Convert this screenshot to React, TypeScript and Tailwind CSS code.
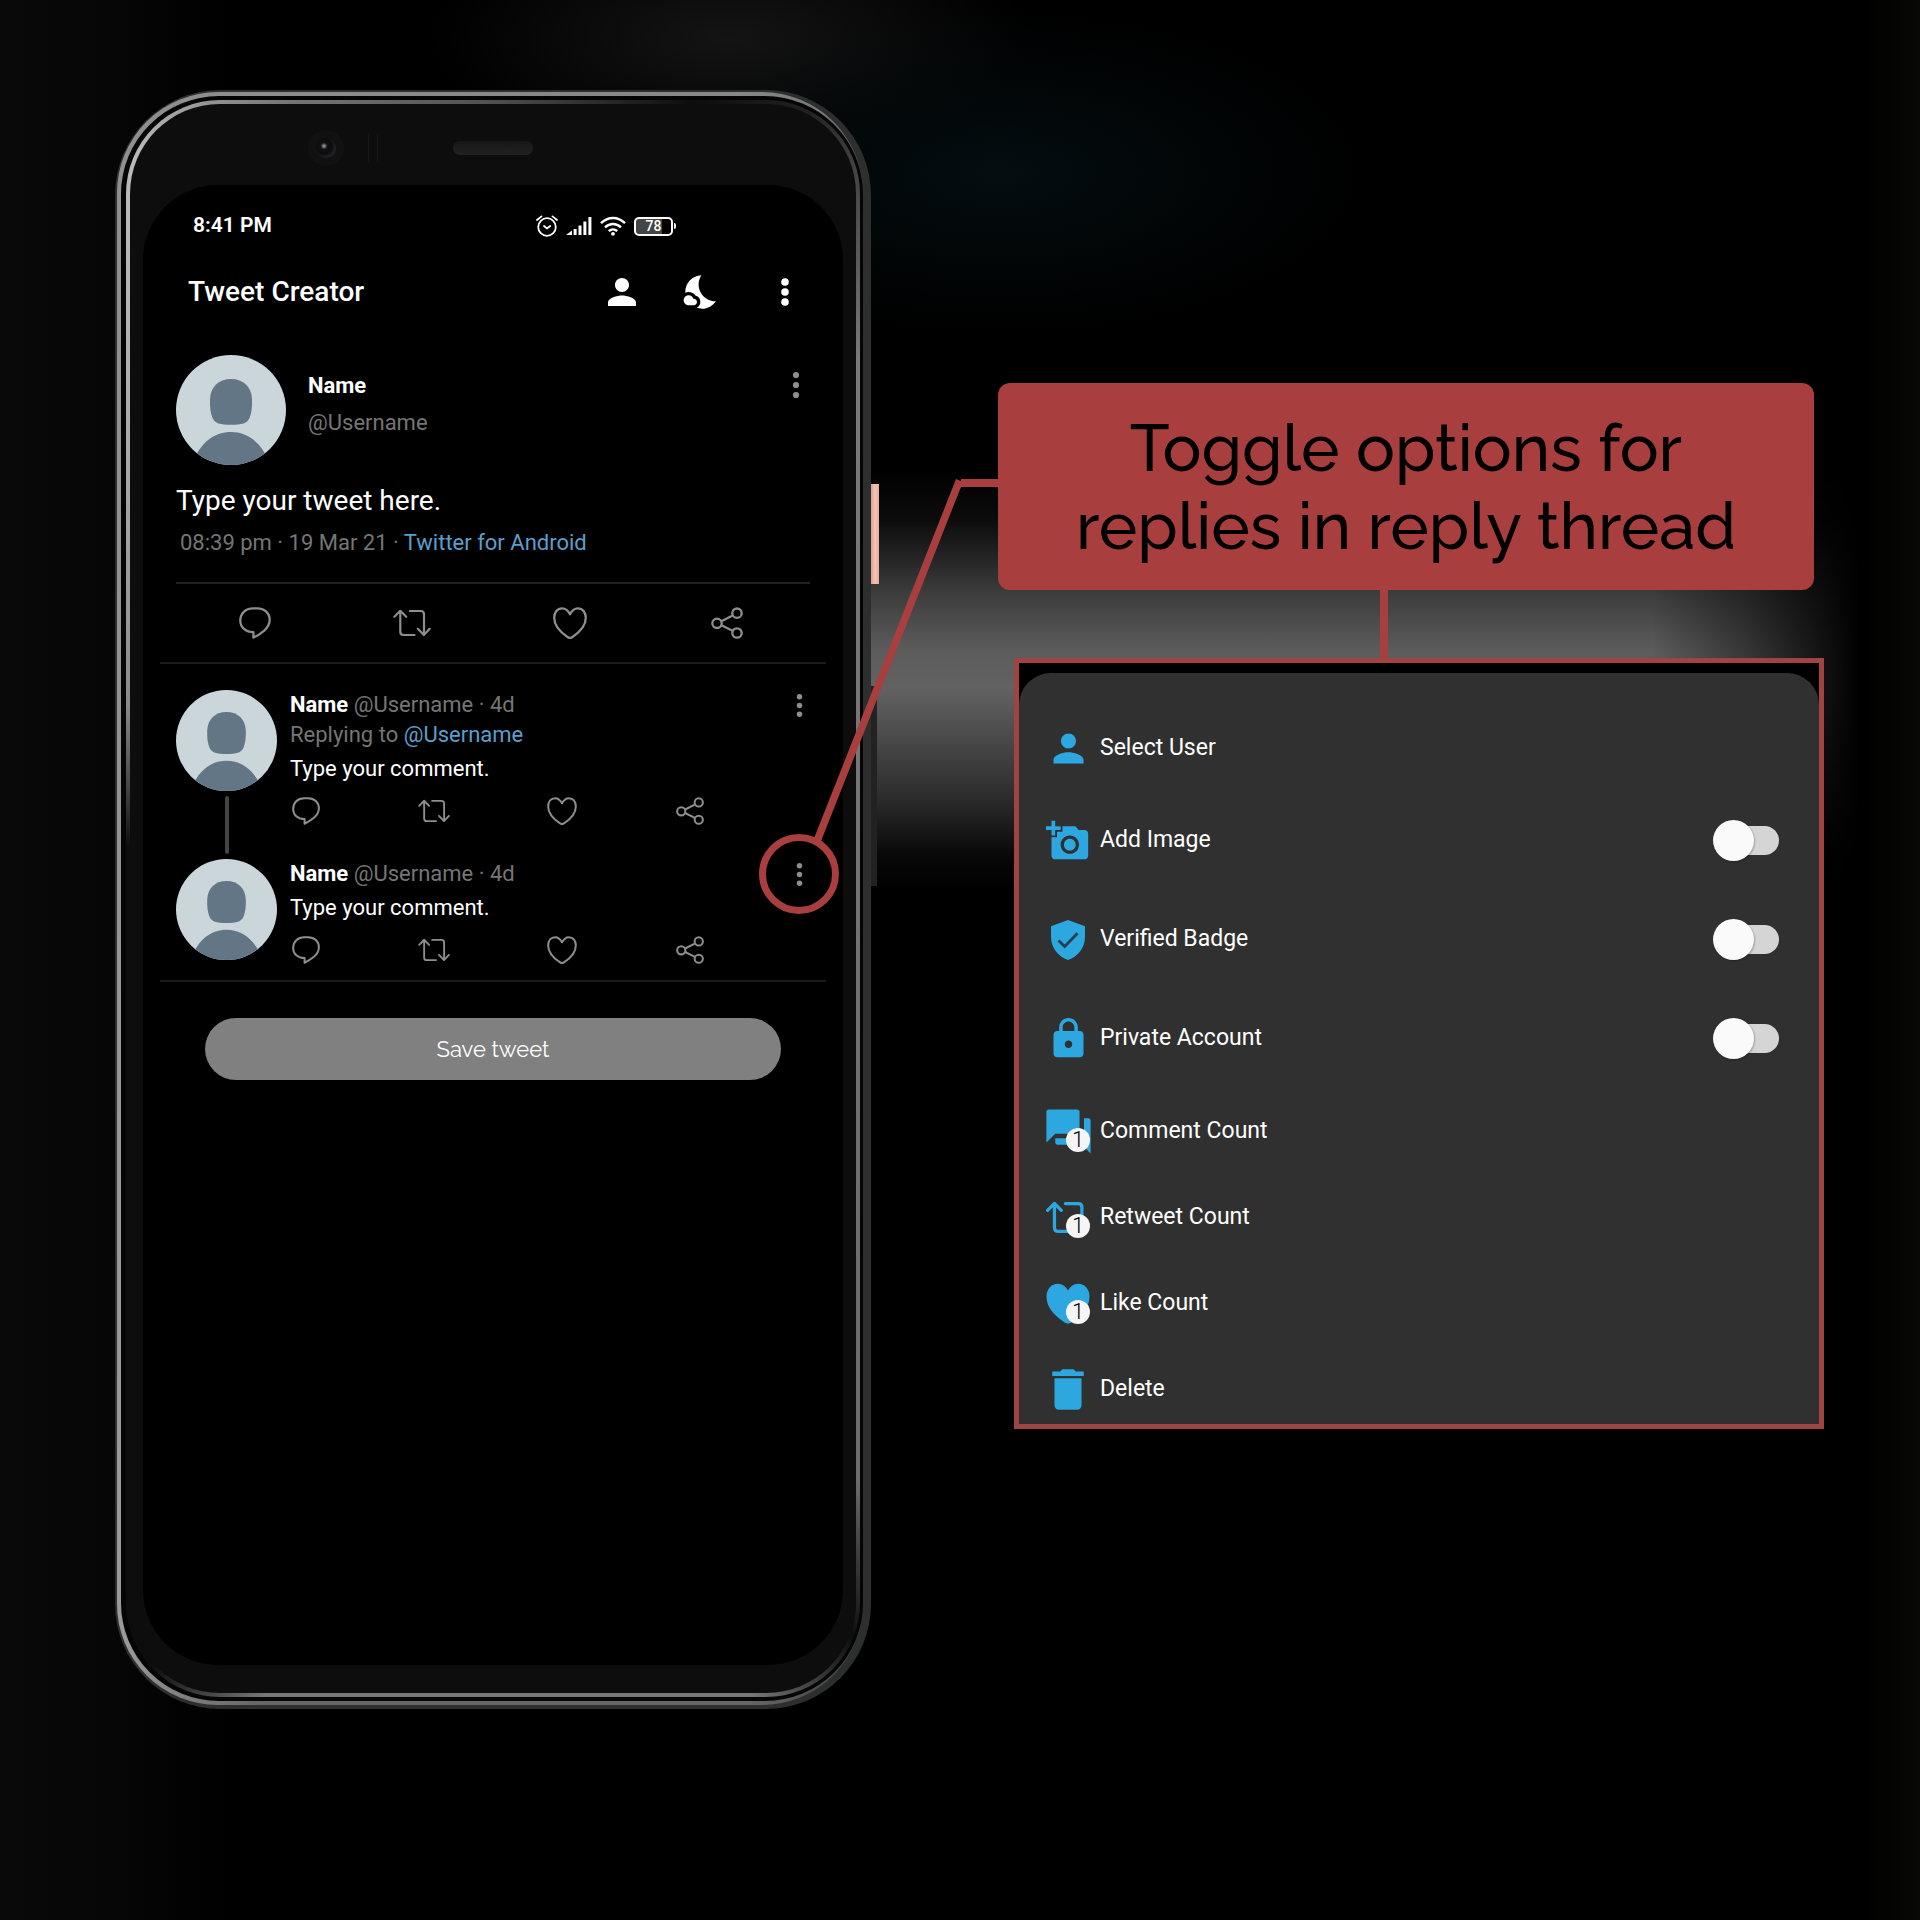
import React from "react";
import {
  MdAddAPhoto,
  MdDelete,
  MdForum,
  MdLock,
  MdNightsStay,
  MdPerson,
} from "react-icons/md";

type IconProps = { className?: string };

const HEART_PATH =
  "M17 7.200C15 3.400 12.400 1.300 9.200 1.300C4.400 1.300 1.200 5.200 1.200 10.800C1.200 18.600 7.600 25.400 14.800 30.200Q17 31.600 19.200 30.200C26.400 25.400 32.800 18.600 32.800 10.800C32.800 5.200 29.600 1.300 24.800 1.300C21.600 1.300 19 3.400 17 7.200Z";

function BubbleIcon({ className }: IconProps) {
  return (
    <svg viewBox="0 0 32 32" className={className} fill="none" stroke="currentColor" strokeWidth="2.300" strokeLinejoin="round" aria-hidden="true">
      <path d="M14.4 30.600V25.2C6.6 25.2 1.300 20.4 1.300 13.6C1.300 6.4 6.6 1.400 14 1.400H18.4C25.6 1.400 30.700 6.2 30.700 12.8C30.700 17.4 28.4 20.9 25 23.8C21.800 26.4 18.400 28.8 14.400 30.600Z" />
    </svg>
  );
}

function RetweetIcon({ className, strokeWidth = 2.2 }: IconProps & { strokeWidth?: number }) {
  return (
    <svg viewBox="0 0 38 28" className={className} fill="none" stroke="currentColor" strokeWidth={strokeWidth} strokeLinecap="round" strokeLinejoin="round" aria-hidden="true">
      <path d="M1.400 7.800L7.300 1.800L13.200 7.800M7.300 2V22.800Q7.300 26 10.400 26H21.500" />
      <path d="M16.800 2H27.800Q31 2 31 5.200V25.800M24.900 19.800L30.900 26L36.700 19.800" />
    </svg>
  );
}

function HeartIcon({ className }: IconProps) {
  return (
    <svg viewBox="0 0 34 32" className={className} fill="none" stroke="currentColor" strokeWidth="2.300" strokeLinejoin="round" aria-hidden="true">
      <path d={HEART_PATH} />
    </svg>
  );
}

function FilledHeartIcon({ className }: IconProps) {
  return (
    <svg viewBox="0 0 34 32" preserveAspectRatio="none" className={className} fill="currentColor" stroke="currentColor" strokeWidth="1.600" strokeLinejoin="round" aria-hidden="true">
      <path d={HEART_PATH} />
    </svg>
  );
}

function ShieldIcon({ className }: IconProps) {
  return (
    <svg viewBox="0 0 34 40" className={className} fill="currentColor" aria-hidden="true">
      <path d="M17 0L34 6.200V17C34 27.500 27 36.500 17 40C7 36.500 0 27.500 0 17V6.200Z" />
      <path d="M7.500 20.500L13.700 26.500L26.500 13.200" fill="none" stroke="#24404d" strokeWidth="2.800" />
    </svg>
  );
}

function ShareIcon({ className }: IconProps) {
  return (
    <svg viewBox="0 0 32 32" className={className} fill="none" stroke="currentColor" strokeWidth="2.300" aria-hidden="true">
      <circle cx="6" cy="16.300" r="4.700" />
      <circle cx="26" cy="6.200" r="4.700" />
      <circle cx="26" cy="26" r="4.700" />
      <path d="M10.400 14.300L21.600 8.600M10.400 18.300L21.600 23.800" />
    </svg>
  );
}

function DotsIcon({ className, radius = 3.1 }: IconProps & { radius?: number }) {
  return (
    <svg viewBox="0 0 8 28" className={className} fill="currentColor" aria-hidden="true">
      <circle cx="4" cy="4" r={radius} />
      <circle cx="4" cy="14" r={radius} />
      <circle cx="4" cy="24" r={radius} />
    </svg>
  );
}

function Avatar({ className }: IconProps) {
  return (
    <svg viewBox="0 0 110 110" className={className} role="img" aria-label="Profile picture">
      <clipPath id="avatar-clip">
        <circle cx="55" cy="55" r="55" />
      </clipPath>
      <g clipPath="url(#avatar-clip)">
        <rect width="110" height="110" fill="#cbd6db" />
        <path d="M55 24C67.500 24 75.500 32 76 44C76.300 52 75.500 58 73.500 63C71 68.500 66 69.800 55 69.800C44 69.800 39 68.500 36.500 63C34.500 58 33.700 52 34 44C34.500 32 42.500 24 55 24Z" fill="#637686" />
        <path d="M14 115C22 88 38 77 55 77C72 77 88 88 96 115Z" fill="#637686" />
      </g>
    </svg>
  );
}

function StatusIcons() {
  return (
    <div className="flex items-center gap-2 text-white">
      <svg viewBox="0 0 22 22" className="size-[22px]" fill="none" stroke="currentColor" strokeWidth="1.800" strokeLinecap="round" aria-label="Alarm set">
        <circle cx="11" cy="12" r="8.800" />
        <path d="M1 5L5.500 1.400M21 5L16.500 1.400M8 11L11 13.400L14.200 11" />
      </svg>
      <svg viewBox="0 0 26 20" className="h-5 w-[26px]" fill="currentColor" aria-label="Signal strength">
        <path d="M0 19L6 14.500V19Z" />
        <rect x="7.600" y="13" width="3" height="6" />
        <rect x="12.500" y="9.500" width="3" height="9.500" />
        <rect x="17.400" y="5.500" width="3" height="13.500" />
        <rect x="22.400" y="1" width="3" height="18" />
      </svg>
      <svg viewBox="0 0 26 20" className="h-5 w-[26px]" fill="none" stroke="currentColor" strokeWidth="2.400" aria-label="Wi-Fi">
        <path d="M1 7.200C8 0.200 18 0.200 25 7.200M5 11.400C9.800 6.900 16.200 6.900 21 11.400M8.800 15.200C11.300 12.800 14.700 12.800 17.200 15.200" />
        <circle cx="13" cy="17.800" r="1.900" fill="currentColor" stroke="none" />
      </svg>
      <div className="flex items-center gap-px">
        <span className="flex h-[19px] w-[39px] items-center justify-center rounded-[5px] border-2 border-white bg-linear-to-r from-[#444] from-75% to-black to-75% text-sm font-medium">
          78
        </span>
        <span className="h-1.5 w-0.5 rounded-r bg-white" />
      </div>
    </div>
  );
}

function Actions({ small = false }: { small?: boolean }) {
  const square = small ? "size-7" : "size-8";
  const items = [
    { label: "Reply", icon: <BubbleIcon className={square} /> },
    { label: "Retweet", icon: <RetweetIcon className={small ? "h-6 w-[33px]" : "h-7 w-[38px]"} /> },
    { label: "Like", icon: <HeartIcon className={small ? "h-7 w-[30px]" : "h-8 w-[34px]"} /> },
    { label: "Share", icon: <ShareIcon className={square} /> },
  ];
  return (
    <div className={small ? "mt-[11px] flex h-8 w-4/5 justify-between" : "grid h-[78px] grid-cols-4 pr-1"}>
      {items.map((item) => (
        <button
          key={item.label}
          type="button"
          aria-label={item.label}
          className={
            small
              ? "flex w-8 items-center justify-center text-[#8e8e8e]"
              : "flex items-center justify-center text-[#8e8e8e]"
          }
        >
          {item.icon}
        </button>
      ))}
    </div>
  );
}

/* Ring round the menu button, with the leader that runs to the caption. */
function Callout() {
  return (
    <svg
      viewBox="0 0 240 440"
      className="pointer-events-none absolute -top-[386px] -left-[29px] z-20 h-[440px] w-[240px] max-w-none"
      fill="none"
      stroke="#a83f3e"
      aria-hidden="true"
    >
      <circle cx="40" cy="400" r="36.500" strokeWidth="7" />
      <path d="M58 367L200.500 6.500" strokeWidth="7.500" />
      <path d="M202 9H240" strokeWidth="8" />
    </svg>
  );
}

function Reply({ replyingTo, threaded, highlighted }: { replyingTo?: string; threaded?: boolean; highlighted?: boolean }) {
  return (
    <article className="flex gap-[13px]">
      <div className="flex w-[101px] shrink-0 flex-col items-center">
        <Avatar className="size-[101px] shrink-0" />
        {threaded && <span className="my-[5px] w-1 flex-1 rounded bg-[#444]" />}
      </div>
      <div className={threaded ? "min-w-0 flex-1 pb-8" : "min-w-0 flex-1"}>
        <div className="flex items-center justify-between">
          <p className="text-[22px] leading-[30px] text-[#757575]">
            <strong className="font-bold text-white">Name</strong> @Username · 4d
          </p>
          <button type="button" aria-label="Reply options" className="relative flex h-7 w-[22px] items-center justify-center text-[#8e8e8e]">
            <DotsIcon className="h-[25px] w-[7px]" />
            {highlighted && <Callout />}
          </button>
        </div>
        {replyingTo && (
          <p className="text-[22px] leading-[30px] text-[#757575]">
            Replying to{" "}
            <a href="#user" className="text-[#5c9fcc]">
              {replyingTo}
            </a>
          </p>
        )}
        <p className="mt-1 text-[22px] leading-[30px] text-white">Type your comment.</p>
        <Actions small />
      </div>
    </article>
  );
}

function Screen() {
  return (
    <div className="aspect-[35/74] rounded-[75px] bg-black pt-[26px] font-[Roboto,sans-serif]">
      <div className="flex h-[30px] items-center pl-[50px]">
        <span className="flex-1 text-[21px] font-semibold text-white">8:41 PM</span>
        <div className="pr-[167px]">
          <StatusIcons />
        </div>
      </div>

      <header className="mt-[26px] flex h-[50px] items-center justify-between pr-[34px] pl-[45px] text-white">
        <h1 className="text-[28px] font-medium">Tweet Creator</h1>
        <div className="flex items-center gap-[39px]">
          <button type="button" aria-label="Account">
            <MdPerson className="size-[42px]" />
          </button>
          <button type="button" aria-label="Dark mode">
            <MdNightsStay className="size-10" />
          </button>
          <button type="button" aria-label="Menu" className="flex w-12 justify-center">
            <DotsIcon className="h-7 w-2" radius={3.8} />
          </button>
        </div>
      </header>

      <main className="px-[17px]">
        <article className="px-4 pt-[38px]">
          <div className="flex">
            <Avatar className="size-[110px]" />
            <div className="ml-[22px] flex-1 pt-[15px]">
              <p className="text-[22px] leading-8 font-bold text-white">Name</p>
              <p className="mt-[5px] text-[22px] leading-8 text-[#757575]">@Username</p>
            </div>
            <button type="button" aria-label="Tweet options" className="mt-4 flex h-7 w-7 justify-center text-[#8e8e8e]">
              <DotsIcon className="h-7 w-2" />
            </button>
          </div>
          <p className="mt-4 text-[28px] leading-10 text-white">Type your tweet here.</p>
          <p className="mt-[7px] pl-1 text-[22px] leading-[30px] text-[#757575]">
            08:39 pm · 19 Mar 21 ·{" "}
            <a href="#source" className="text-[#5c9fcc]">
              Twitter for Android
            </a>
          </p>
          <div className="mt-6 border-t-2 border-[#202020]">
            <Actions />
          </div>
        </article>

        <section aria-label="Replies" className="border-y-2 border-[#1c1c1c] px-4 pt-[26px] pb-[14px]">
          <Reply replyingTo="@Username" threaded />
          <Reply highlighted />
        </section>

        <div className="mt-9 px-[45px]">
          <button type="button" className="h-[62px] w-full rounded-full bg-[#808080] font-[Raleway,Lato,sans-serif] text-[22px] text-white">
            Save tweet
          </button>
        </div>
      </main>
    </div>
  );
}

function Phone() {
  return (
    <div className="relative flex-[756]">
      <span className="absolute top-[394px] -right-2 h-[100px] w-2 bg-linear-to-r from-[#d9a090] via-[#f7c4b6] to-[#e8ab9b]" />
      <span className="absolute top-[596px] -right-1.5 h-[200px] w-1.5 bg-[#222]" />
      <div className="relative rounded-[105px] bg-[#2d2e2e] pt-[2px] pr-[8px] pb-[4px] pl-[2px]">
        <div className="rounded-[101px] bg-[conic-gradient(#888_0deg,#888_17deg,#777_23deg,#2d2e2e_30deg,#2d2e2e_152deg,#666_162deg,#666_196deg,#999_206deg,#909090_330deg,#888_360deg)] pt-1 pb-1 pl-1">
          <div className="rounded-[98px] bg-[#050505] pt-1 pr-[3px] pb-1 pl-[5px]">
            <div className="rounded-[94px] bg-[conic-gradient(#505050_0deg,#0d0d0d_14deg,#222_22deg,#7a7a7a_34deg,#6c6c6c_148deg,#0d0d0d_154deg,#777_162deg,#777_196deg,#0d0d0d_204deg,#0d0d0d_278deg,#888_298deg,#bbb_334deg,#777_345deg,#505050_360deg)] p-1">
              <div className="rounded-[90px] bg-[#0d0d0d] px-[13px] pb-[28px]">
                <div className="flex h-[81px] items-center">
                  <div className="flex flex-1 items-center">
                    <span className="mt-[7px] ml-[165px] flex size-9 items-center justify-center rounded-full bg-[#111]">
                      <span className="size-5 rounded-full bg-[radial-gradient(circle_at_40%_40%,#aaa_0,#111_20%,#0c0c0e_45%,#26262b_75%,#111_100%)]" />
                    </span>
                    <span className="mt-[7px] ml-6 h-7 w-2.5 border-x border-[#151515]" />
                  </div>
                  <span className="mt-[7px] h-[14px] w-20 rounded-full bg-linear-to-b from-[#161616] to-[#222]" />
                  <div className="flex-1" />
                </div>
                <Screen />
              </div>
            </div>
          </div>
        </div>
      </div>
    </div>
  );
}

function CountIcon({ children }: { children: React.ReactNode }) {
  return (
    <span className="relative flex items-center justify-center">
      {children}
      <span className="absolute top-1/2 left-1/2 -mt-[3px] -ml-[2px] flex size-6 items-center justify-center rounded-full bg-[#f5f5f5] text-[22px] leading-6 font-light text-black">
        1
      </span>
    </span>
  );
}

const options: { label: string; icon: React.ReactNode; toggle?: boolean }[] = [
  { label: "Select User", icon: <MdPerson className="size-[45px]" /> },
  { label: "Add Image", icon: <MdAddAPhoto className="size-[44px]" />, toggle: true },
  { label: "Verified Badge", icon: <ShieldIcon className="h-10 w-[34px]" />, toggle: true },
  { label: "Private Account", icon: <MdLock className="size-[45px]" />, toggle: true },
  { label: "Comment Count", icon: <CountIcon><MdForum className="size-[53px]" /></CountIcon> },
  { label: "Retweet Count", icon: <CountIcon><RetweetIcon className="h-[33px] w-11" strokeWidth={2.8} /></CountIcon> },
  { label: "Like Count", icon: <CountIcon><FilledHeartIcon className="h-[41px] w-11" /></CountIcon> },
  { label: "Delete", icon: <MdDelete className="size-[55px]" /> },
];

function OptionsSheet() {
  return (
    <div className="ml-4 overflow-hidden border-[5px] border-[#a04343] bg-black pt-[10px]">
      <div className="-mb-2 rounded-t-[32px] bg-[#303030] pt-8 font-[Roboto,sans-serif] text-[23px] text-white">
        {options.map((option) =>
          option.toggle ? (
            <label key={option.label} className="flex h-[99px] items-center pr-10 pl-[22px]">
              <span className="flex w-[54px] justify-center text-[#2ca7df]">{option.icon}</span>
              <span className="ml-[5px] flex-1">{option.label}</span>
              <input
                type="checkbox"
                role="switch"
                className="relative h-[41px] w-[66px] appearance-none before:absolute before:top-1.5 before:right-0 before:h-[29px] before:w-12 before:rounded-full before:bg-[#d5d5d5] after:absolute after:top-0 after:left-0 after:size-[41px] after:rounded-full after:bg-[#fafafa] after:shadow-[1px_1px_2px_rgba(0,0,0,0.250)]"
              />
            </label>
          ) : (
            <button key={option.label} type="button" className="flex h-[86px] w-full items-center pr-10 pl-[22px] text-left">
              <span className="flex w-[54px] justify-center text-[#2ca7df]">{option.icon}</span>
              <span className="ml-[5px] flex-1">{option.label}</span>
            </button>
          ),
        )}
      </div>
    </div>
  );
}

export default function App() {
  return (
    <div className="relative isolate min-h-screen overflow-hidden bg-black">
      <div className="absolute inset-0 -z-10 bg-[radial-gradient(ellipse_360px_160px_at_52%_9%,#040d10,transparent),radial-gradient(ellipse_300px_120px_at_38%_2%,#141414,transparent),linear-gradient(to_right,#090909,#060606_6%,transparent_12%,transparent_97%,#080806)]" />
      <div className="absolute top-[470px] right-[60px] left-[700px] -z-10 h-[420px] bg-[linear-gradient(to_bottom,transparent,#0c0c0c_12%,#3e3e3e_30%,#5c5c5c_43%,#626262_52%,#525252_60%,#2c2c2c_78%,#080808_92%,transparent)] [mask-image:linear-gradient(to_right,black_82%,rgba(0,0,0,0.6)_90%,transparent)]" />
      <div className="flex items-start gap-[127px] pt-[90px] pr-24 pb-[211px] pl-[115px]">
        <Phone />
        <div className="flex-[826] pt-[293px]">
          <div className="mr-[10px] flex h-[207px] items-center justify-center rounded-xl bg-[#a83f3e] text-center font-[Raleway,Lato,sans-serif] text-[65px] leading-[78px] font-medium text-black">
            <h2>
              Toggle options for
              <br />
              replies in reply thread
            </h2>
          </div>
          <div className="ml-[382px] h-[68px] w-2 bg-[#a83f3e]" />
          <OptionsSheet />
        </div>
      </div>
    </div>
  );
}
